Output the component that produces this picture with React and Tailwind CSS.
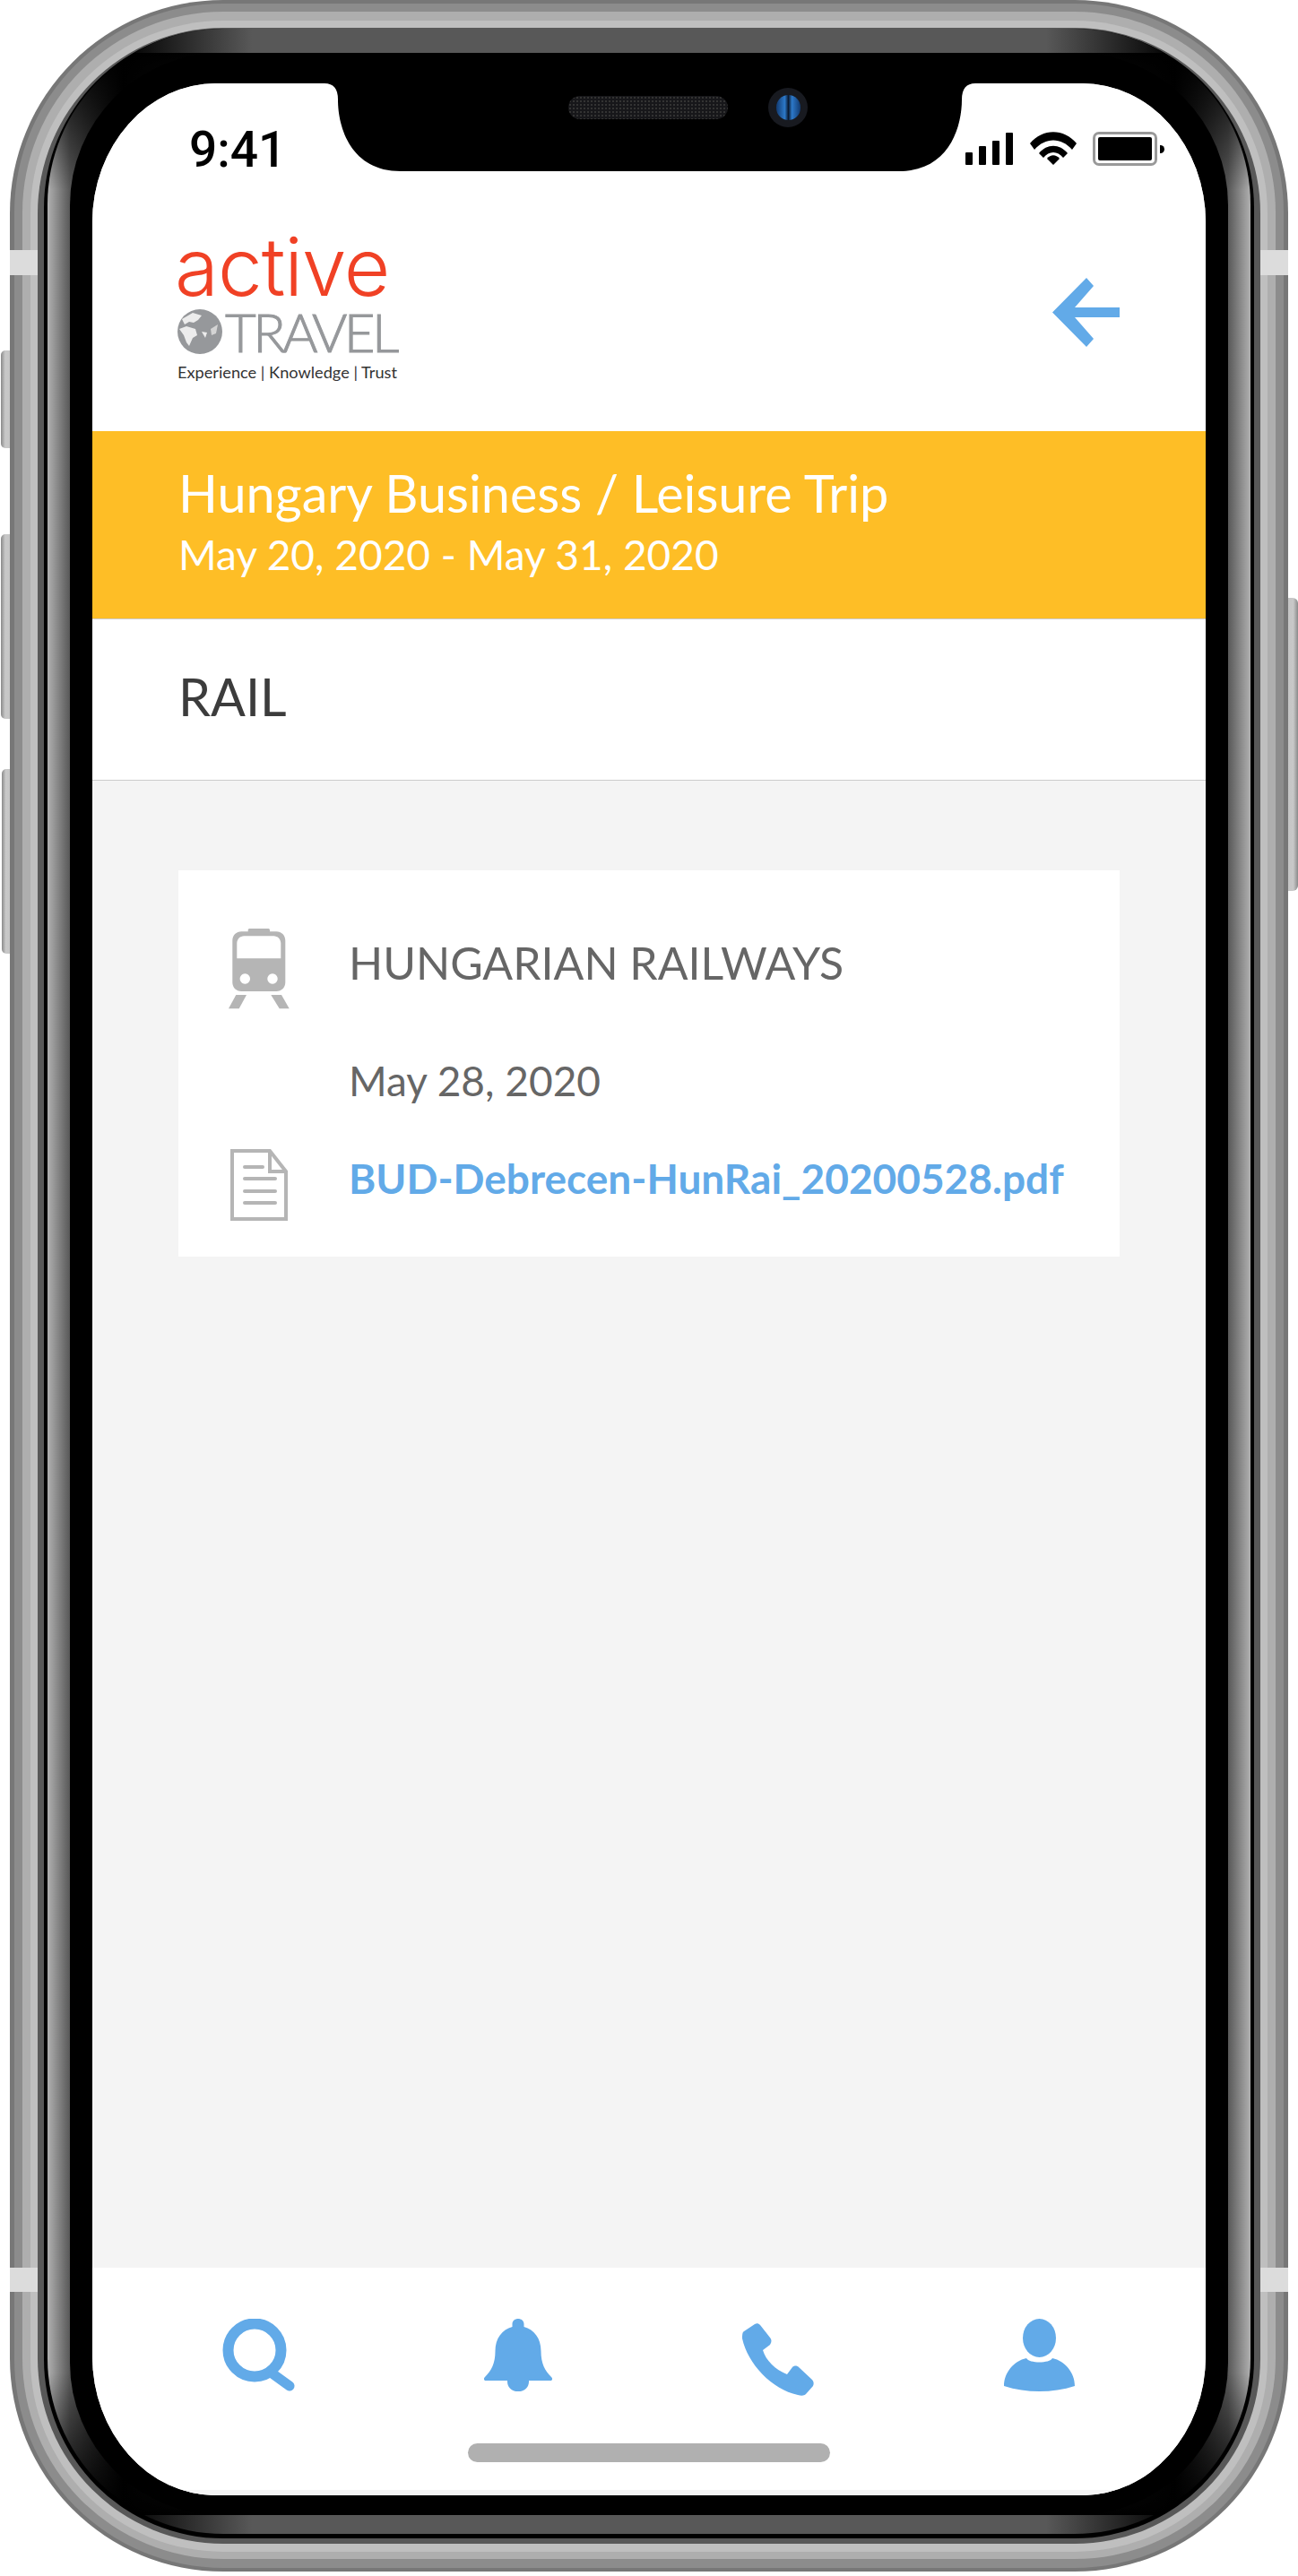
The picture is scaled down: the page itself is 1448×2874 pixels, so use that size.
import { Fragment } from 'react';

const lato = "font-['Lato','Open_Sans',sans-serif]";

function Buttons() {
    return (
        <Fragment>
            <div className="absolute left-[1px] top-[391px] h-[109px] w-[12px] rounded-l-[5px] bg-[linear-gradient(to_right,#8a8a8a,#c8c8c8_40%,#c4c4c4)]" />
            <div className="absolute left-[1px] top-[596px] h-[206px] w-[12px] rounded-l-[5px] bg-[linear-gradient(to_right,#8a8a8a,#c8c8c8_40%,#c4c4c4)]" />
            <div className="absolute left-[2px] top-[858px] h-[206px] w-[11px] rounded-l-[5px] bg-[linear-gradient(to_right,#8a8a8a,#c8c8c8_40%,#c4c4c4)]" />
            <div className="absolute left-[1435px] top-[667px] h-[327px] w-[13px] rounded-r-[6px] bg-[linear-gradient(to_left,#8a8a8a,#c8c8c8_40%,#c4c4c4)]" />
        </Fragment>
    );
}

function AntennaBands() {
    return (
        <Fragment>
            <div className="absolute left-[11px] top-[279px] h-[28px] w-[31px] bg-[#dcdcdc]" />
            <div className="absolute left-[1406px] top-[279px] h-[28px] w-[31px] bg-[#dcdcdc]" />
            <div className="absolute left-[11px] top-[2530px] h-[27px] w-[31px] bg-[#dcdcdc]" />
            <div className="absolute left-[1406px] top-[2530px] h-[27px] w-[31px] bg-[#dcdcdc]" />
        </Fragment>
    );
}

function Notch() {
    return (
        <div className="absolute left-[259px] top-0 h-[98px] w-[726px]">
            <svg width="726" height="98" viewBox="0 0 726 98" className="block">
                <path d="M0 0Q15 0 15 18C15 50 30 98 85 98H641C696 98 711 50 711 18Q711 0 726 0Z" fill="#000" />
            </svg>
            {/* speaker */}
            <div className="absolute left-[272px] top-[14px] h-[26px] w-[178px] rounded-full bg-[#17171a] bg-[radial-gradient(#333_1px,transparent_1px)] bg-[length:4px_4px]" />
            {/* camera */}
            <div className="absolute left-[495px] top-[5px] flex h-[44px] w-[44px] items-center justify-center rounded-full bg-[#181a20]">
                <div className="h-[28px] w-[27px] rounded-full bg-[linear-gradient(to_right,#123a70,#2c78c8_35%,#0a1a30_50%,#2c78c8_65%,#123a70)]" />
            </div>
        </div>
    );
}

function StatusIcons() {
    return (
        <div className="flex items-start">
            <svg width="53" height="36" viewBox="0 0 53 36" fill="#000" className="mt-[1px]">
                <rect x="0" y="22" width="8" height="14" rx="1" />
                <rect x="15" y="15" width="8" height="21" rx="1" />
                <rect x="30" y="9" width="8" height="27" rx="1" />
                <rect x="45" y="0" width="8" height="36" rx="1" />
            </svg>
            <svg width="52" height="37" viewBox="0 0 52 37" fill="#000" className="ml-[19px]">
                <path d="M0 13C14-4 38-4 52 13L47 20C35 6 17 6 5 20Z" />
                <path d="M10 24C19 13 33 13 42 24L37 29C31 21 21 21 15 29Z" />
                <path d="M19 30C23 25 29 25 33 30L26 37Z" />
            </svg>
            <div className="ml-[18px] flex items-center">
                <div className="h-[38px] w-[72px] rounded-[7px] border-[3px] border-[#999] bg-white p-[3px]">
                    <div className="h-full w-full rounded-[2px] bg-black" />
                </div>
                <div className="ml-[3px] h-[9px] w-[5px] rounded-r-full bg-black" />
            </div>
        </div>
    );
}

function Globe() {
    return (
        <svg width="50" height="50" viewBox="0 0 50 50">
            <circle cx="25" cy="25" r="25" fill="#96989b" />
            <path d="M5 11L17 4L27 7L23 12L18 15L13 14L8 17Z" fill="#ececec" />
            <path d="M2 22L10 19L20 22L22 29L17 32L13 41L10 37L7 29Z" fill="#ececec" />
            <path d="M27 25L33 26L31 32Z" fill="#ececec" />
            <path d="M37 22L45 17L43 27L38 29Z" fill="#d4d4d4" />
        </svg>
    );
}

function Logo() {
    return (
        <div className={`flex w-[248px] flex-col ${lato}`}>
            <div className="mt-[5px] ml-[-3px] h-[72px] font-['Inter',sans-serif] text-[89px] leading-[72px] font-light tracking-[-1px] text-[#f04125]">active</div>
            <div className="mt-[11px] flex h-[50px] items-center">
                <Globe />
                <span className="ml-[3px] text-[60px] leading-[50px] font-light tracking-[-3.5px] text-[#96989b] [-webkit-text-stroke:1px_#96989b]">TRAVEL</span>
            </div>
            <div className="mt-[10px] text-[18.2px] leading-[20px] whitespace-nowrap text-[#333]">Experience | Knowledge | Trust</div>
        </div>
    );
}

function TrainIcon() {
    return (
        <svg width="69" height="91" viewBox="0 0 69 91" fill="#b5b5b5">
            <rect x="22.7" y="0" width="24.3" height="6" rx="1.5" />
            <path fillRule="evenodd" d="M15.3 3.3H54.3C60 3.3 64.3 7.6 64.3 13.3V60C64.3 65.7 60 70 54.3 70H15.3C9.6 70 5.3 65.7 5.3 60V13.3C5.3 7.6 9.6 3.3 15.3 3.3ZM18.3 8.3C13.9 8.3 10.3 11.9 10.3 16.3V33.3H59.3V16.3C59.3 11.9 55.7 8.3 51.3 8.3ZM19.3 50.3A5.7 5.7 0 1 0 19.31 50.3ZM50 50.3A5.7 5.7 0 1 0 50.01 50.3Z" />
            <path d="M9.3 74H21L12.7 89.3H1Z" />
            <path d="M48.3 74H60L68.7 89.3H57.7Z" />
        </svg>
    );
}

function DocIcon() {
    return (
        <svg width="64" height="80" viewBox="0 0 64 80" fill="none" stroke="#b5b5b5">
            <path d="M2 2H44L62 25V78H2Z" strokeWidth="4" />
            <path d="M44 2V25H62" strokeWidth="4" />
            <g strokeWidth="4" strokeLinecap="round">
                <line x1="16" y1="20" x2="36" y2="20" />
                <line x1="16" y1="33" x2="50" y2="33" />
                <line x1="16" y1="47" x2="50" y2="47" />
                <line x1="16" y1="60" x2="50" y2="60" />
            </g>
        </svg>
    );
}

function SearchIcon() {
    return (
        <svg width="81" height="81" viewBox="0 0 81 81" fill="none" stroke="#62aae8">
            <circle cx="36" cy="35" r="29.5" strokeWidth="12" />
            <line x1="57" y1="62" x2="75" y2="75" strokeWidth="11" strokeLinecap="round" />
        </svg>
    );
}

function BellIcon() {
    return (
        <svg width="76" height="81" viewBox="0 0 76 81" fill="#62aae8">
            <path d="M31.5 9V6C31.5-2 44.5-2 44.5 6V9C56 12 63.5 22 63.5 36C63.5 50 68 58 75 65C77 67 76 69 74 69H2C0 69-1 67 1 65C8 58 12.5 50 12.5 36C12.5 22 20 12 31.5 9Z" />
            <path d="M26 69H50V70C50 85 26 85 26 70Z" />
        </svg>
    );
}

function PhoneIcon() {
    return (
        <svg width="81" height="81" viewBox="0 0 81 81" fill="#62aae8" className="mt-[5px]">
            <path d="M14 1C16 0 18 0 20 2L31 16C33 18 33 21 31 24L23 30C26 41 37 52 50 57L56 49C58 47 61 47 63 49L78 63C80 65 80 68 79 70L71 79C69 81 66 81 62 80C33 74 6 45 0 17C0 13 0 10 2 9Z" />
        </svg>
    );
}

function UserIcon() {
    return (
        <svg width="79" height="81" viewBox="0 0 79 81" fill="#62aae8">
            <ellipse cx="39.5" cy="21.5" rx="18.5" ry="21.5" />
            <path d="M25 44C28 50 51 50 54 44C68 47 79 60 79 75C54 83 25 83 0 75C0 60 11 47 25 44Z" />
        </svg>
    );
}

function Screen() {
    return (
        <div className={`relative flex h-full flex-col overflow-hidden rounded-[138px/155px] bg-[#f4f4f4] ${lato}`}>
            <Notch />

            <div className="h-[388px] bg-white">
                {/* status bar */}
                <div className="flex items-start justify-between pt-[54px] pr-[46px] pl-[108px]">
                    <span className="font-['Roboto',sans-serif] text-[55px] leading-[40px] font-medium text-black">9:41</span>
                    <StatusIcons />
                </div>
                {/* header */}
                <div className="mt-[70px] flex items-start justify-between pr-[96px] pl-[95px]">
                    <Logo />
                    <svg width="75" height="77" viewBox="0 0 75 77" fill="#62aae8" className="mt-[53px]">
                        <path d="M0 38.5L38 0L46 9L25 33H75V44H25L46 68L38 77Z" />
                    </svg>
                </div>
            </div>

            {/* trip banner */}
            <div className="h-[210px] border-b border-[#cccccc] bg-[#febe26] pt-[38px] pl-[96px] text-white">
                <div className="text-[57.6px] leading-[62px]">Hungary Business / Leisure Trip</div>
                <div className="mt-[11px] text-[46px] leading-[54px]">May 20, 2020 - May 31, 2020</div>
            </div>

            <div className="flex h-[180px] items-center border-b border-[#cccccc] bg-white pb-[6px] pl-[96px] text-[57.5px] text-[#3c3c3c]">RAIL</div>

            {/* content */}
            <div className="flex-1 px-[96px] pt-[100px]">
                <div className="h-[431px] w-[1050px] bg-white">
                    <div className="flex items-start pt-[65px] pl-[55px]">
                        <TrainIcon />
                        <div className="ml-[66px] leading-[58px] text-[#666666]">
                            <div className="mt-[9px] text-[50px]">HUNGARIAN RAILWAYS</div>
                            <div className="mt-[74px] text-[46px]">May 28, 2020</div>
                        </div>
                    </div>
                    <div className="mt-[47px] flex items-start pl-[58px]">
                        <DocIcon />
                        <div className="ml-[68px] pt-[5px] text-[46px] leading-[56px] font-bold text-[#62aae8]">BUD-Debrecen-HunRai_20200528.pdf</div>
                    </div>
                </div>
            </div>

            {/* bottom nav */}
            <div className="h-[254px] border-b-[6px] border-[#f4f4f4] bg-white pt-[57px]">
                <div className="flex items-start justify-between pr-[146px] pl-[145px]">
                    <SearchIcon />
                    <BellIcon />
                    <PhoneIcon />
                    <UserIcon />
                </div>
                <div className="mx-auto mt-[53px] h-[21px] w-[404px] rounded-full bg-[#b0b0b0]" />
            </div>
        </div>
    );
}

export default function App() {
    return (
        <div className="relative h-[2874px] w-[1448px] overflow-hidden bg-white">
            <Buttons />
            {/* phone body, ring by ring */}
            <div className="absolute left-[11px] top-0 h-[2869px] w-[1426px] rounded-[238px] bg-[#777777] px-[5px] pt-[4px] pb-[4px]">
                <div className="h-full rounded-[233px] bg-[#8c8c8c] px-[9px] pt-[9px] pb-[10px]">
                    <div className="h-full rounded-[224px] bg-[#aeaeae] px-[9px] pt-[10px] pb-[8px]">
                        <div className="h-full rounded-[215px] bg-[#bfbfbf] px-[8px] pt-[8px] pb-[9px]">
                            <div className="h-full rounded-[207px] bg-[#585858] px-[7px] pt-[1px] pb-[6px]">
                                <div className="h-full rounded-[200px] bg-black px-[4px] pb-[5px]">
                                    <div className="h-full rounded-[196px] bg-[linear-gradient(to_bottom,transparent_27px,#000_27px,transparent_180px,transparent_calc(100%_-_180px),#000_calc(100%_-_21px),transparent_calc(100%_-_21px)),linear-gradient(to_right,#b0b0b0,#585858_25px,#000_85px,#585858_228px,#585858_calc(100%_-_228px),#000_calc(100%_-_85px),#585858_calc(100%_-_25px),#b0b0b0)] px-[25px] pt-[27px] pb-[21px]">
                                        <div className="h-full rounded-[170px] bg-black px-[25px] pt-[34px] pb-[22px]">
                                            <Screen />
                                        </div>
                                    </div>
                                </div>
                            </div>
                        </div>
                    </div>
                </div>
            </div>
            <AntennaBands />
        </div>
    );
}
